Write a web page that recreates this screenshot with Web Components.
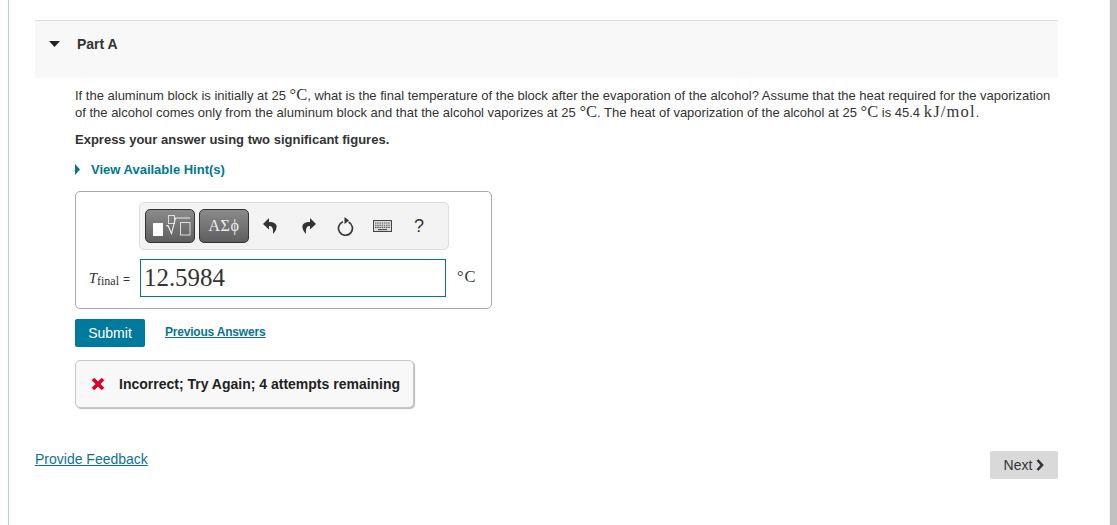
<!DOCTYPE html>
<html><head><meta charset="utf-8"><title>Part A</title>
<style>
html,body{margin:0;padding:0;height:525px;overflow:hidden;background:#fff}
body{font-family:"Liberation Sans",Arial,sans-serif;color:#333}
</style></head><body>
<mp-page>
  <mp-part-header>Part A</mp-part-header>
  <mp-question></mp-question>
  <mp-answer></mp-answer>
  <mp-actions></mp-actions>
  <mp-feedback>Incorrect; Try Again; 4 attempts remaining</mp-feedback>
  <mp-footer></mp-footer>
</mp-page>
<script>
function def(name, html){
  customElements.define(name, class extends HTMLElement{
    constructor(){super();this.attachShadow({mode:'open'}).innerHTML=html;}
  });
}
def('mp-page',`<style>
:host{display:flex;width:1117px;height:525px;box-sizing:border-box;padding-left:8px}
.rule{width:1px;background:#b7cde0;flex:none}
.main{flex:none;width:1023px;margin-left:26px;padding-top:20px;display:flex;flex-direction:column}
.bar{flex:none;width:7px;margin-left:51px;background:#c1c1c1;border-left:1px solid #f0f0f0}
</style><div class="rule"></div><div class="main"><slot></slot></div><div class="bar"></div>`);

def('mp-part-header',`<style>
:host{display:flex;align-items:flex-start;height:57px;background:#f8f8f8;border-top:1px solid #d9dde3;font-size:14px;font-weight:bold;color:#333}
svg{display:block;margin:20px 0 0 14px}
span{margin:15px 0 0 17px;line-height:16px}
</style><svg width="11" height="6" viewBox="0 0 11 6"><path d="M0 0h11L5.500 6z" fill="#222"/></svg><span><slot></slot></span>`);

def('mp-question',`<style>
:host{display:block;padding:9px 0 0 40px;font-size:13px;color:#333}
p{margin:0;line-height:17px;height:17px;white-space:nowrap}
.m{font-family:"Liberation Serif",serif;font-size:16.5px;line-height:0}
.u{letter-spacing:1.2px}
.b{font-weight:bold;margin-top:10px;line-height:17px;display:block}
.hint{display:flex;align-items:center;margin-top:13px;color:#00788f;font-weight:bold;line-height:17px}
.hint svg{margin-right:11px}
</style>
<p>If the aluminum block is initially at 25 <span class="m">°C</span>, what is the final temperature of the block after the evaporation of the alcohol? Assume that the heat required for the vaporization</p>
<p>of the alcohol comes only from the aluminum block and that the alcohol vaporizes at 25 <span class="m">°C</span>. The heat of vaporization of the alcohol at 25 <span class="m">°C</span> is 45.4 <span class="m u">kJ/mol</span>.</p>
<span class="b">Express your answer using two significant figures.</span>
<div class="hint"><svg width="5" height="11" viewBox="0 0 5 11"><path d="M0 0l5 5.500L0 11z" fill="#0b7392"/></svg>View Available Hint(s)</div>`);

def('mp-toolbar',`<style>
:host{display:flex;align-items:center;width:310px;height:48px;box-sizing:border-box;background:#f3f3f3;border:1px solid #ddd;border-radius:5px;padding:0 0 0 5px}
.btn{display:flex;align-items:center;justify-content:center;width:50px;height:34px;flex:none;box-sizing:border-box;border:1px solid #333;border-radius:5px;background:linear-gradient(#8a8a8a,#5f5f5f);color:#eee}
.g{font-family:"Liberation Serif",serif;font-size:16px;letter-spacing:.6px;margin-left:4px}
.i{display:flex;align-items:center;justify-content:center;flex:none}
</style>
<div class="btn"><svg width="48" height="32" viewBox="0 0 48 32">
<rect x="7" y="13" width="10" height="13" fill="#fff"/>
<rect x="22.500" y="5.500" width="6" height="8" fill="none" stroke="#ddd"/>
<path d="M20 16l2-.5 3.500 8L29.500 8H44" fill="none" stroke="#eee" stroke-width="1.100"/>
<rect x="34.500" y="12.500" width="9.500" height="12.500" fill="none" stroke="#ddd"/></svg></div>
<div class="btn g">ΑΣϕ</div>
<div class="i" style="width:42px"><svg width="14" height="16" viewBox="0 0 14 16"><path d="M6 0L0 6l6 5.500V8c3 0 4.500 1.500 4 8 3-3 4.500-7 3-9.500C11.500 4.500 9 4 6 4z" fill="#333"/></svg></div>
<div class="i" style="width:36px"><svg width="14" height="16" viewBox="0 0 14 16"><path d="M8 0l6 6-6 5.500V8c-3 0-4.500 1.500-4 8-3-3-4.500-7-3-9.500C2.500 4.500 5 4 8 4z" fill="#333"/></svg></div>
<div class="i" style="width:36px"><svg width="17" height="19" viewBox="0 0 17 19"><path d="M11.600 5a7 7 0 1 1-5.600-.3" fill="none" stroke="#3a3a3a" stroke-width="1.700"/><path d="M7.500 0L12 3.500 7.500 7z" fill="#333"/></svg></div>
<div class="i" style="width:38px"><svg width="19" height="12" viewBox="0 0 19 12"><rect x=".5" y=".5" width="18" height="11" fill="#ddd" stroke="#444"/><path d="M2 3h15M2 5.200h15M2 7.400h15" stroke="#555" stroke-width="1.100" stroke-dasharray="1.500 .7"/><path d="M5 9.600h9" stroke="#444" stroke-width="1.100"/></svg></div>
<div class="i" style="width:36px;font-size:18px;color:#333">?</div>`);

def('mp-answer',`<style>
:host{display:block;width:417px;height:118px;box-sizing:border-box;margin:13px 0 0 40px;border:1px solid #aaa;border-radius:5px;padding:10px 0 0 0}
mp-toolbar{margin-left:63px}
.row{display:flex;align-items:center;margin-top:9px;height:38px}
.lab{width:64px;flex:none;text-align:right;font-family:"Liberation Serif",serif;color:#333;font-size:14px;white-space:nowrap;box-sizing:border-box;padding-right:10px}
.lab i{font-size:15px}
.lab sub{font-size:12px;vertical-align:-2px;line-height:0}
.lab b{font-weight:normal;font-family:"Liberation Sans",sans-serif;font-size:12px;margin-left:4px}
.inp{width:306px;height:38px;box-sizing:border-box;border:1px solid #0b7392;font-family:"Liberation Serif",serif;font-size:24.900px;line-height:36px;padding-left:3px;color:#333;flex:none}
.u{font-family:"Liberation Serif",serif;font-size:16.500px;letter-spacing:1px;margin:0 0 2px 11px;color:#333}
</style>
<mp-toolbar></mp-toolbar>
<div class="row"><div class="lab"><i>T</i><sub>final</sub><b>=</b></div><div class="inp">12.5984</div><div class="u">°C</div></div>`);

def('mp-actions',`<style>
:host{display:flex;align-items:center;margin:10px 0 0 40px;height:28px}
.s{width:70px;height:28px;background:#007a9c;color:#fff;border-radius:2px;font-size:14px;display:flex;align-items:center;justify-content:center}
a{margin-left:20px;padding-bottom:2px;color:#0b7392;font-weight:bold;font-size:12px;letter-spacing:-.2px;text-decoration:underline}
</style><div class="s">Submit</div><a>Previous Answers</a>`);

def('mp-feedback',`<style>
:host{display:flex;align-items:center;width:339px;height:48px;box-sizing:border-box;margin:13px 0 0 40px;background:#f8f8f8;border:1px solid #c8c8c8;border-radius:5px;box-shadow:1px 1px 1px #bbb;font-weight:bold;font-size:14px;color:#222;white-space:nowrap}
svg{margin:0 14px 0 15px;flex:none}
</style><svg width="14" height="14" viewBox="0 0 14 14"><path d="M2 2l10 10M12 2L2 12" stroke="#dc0028" stroke-width="3.600"/></svg><span><slot></slot></span>`);

def('mp-footer',`<style>
:host{display:flex;justify-content:space-between;align-items:flex-start;margin-top:43px}
a{color:#0b7392;font-size:14px;text-decoration:underline;line-height:16px}
.n{display:flex;align-items:center;justify-content:center;gap:4px;width:68px;height:28px;background:#d9d9d9;border-radius:2px;font-size:14px;color:#333}
</style><a>Provide Feedback</a><div class="n">Next<svg width="8" height="12" viewBox="0 0 8 12"><path d="M1.500 1L6 6l-4.500 5" fill="none" stroke="#333" stroke-width="2.600"/></svg></div>`);
</script>
</body></html>
